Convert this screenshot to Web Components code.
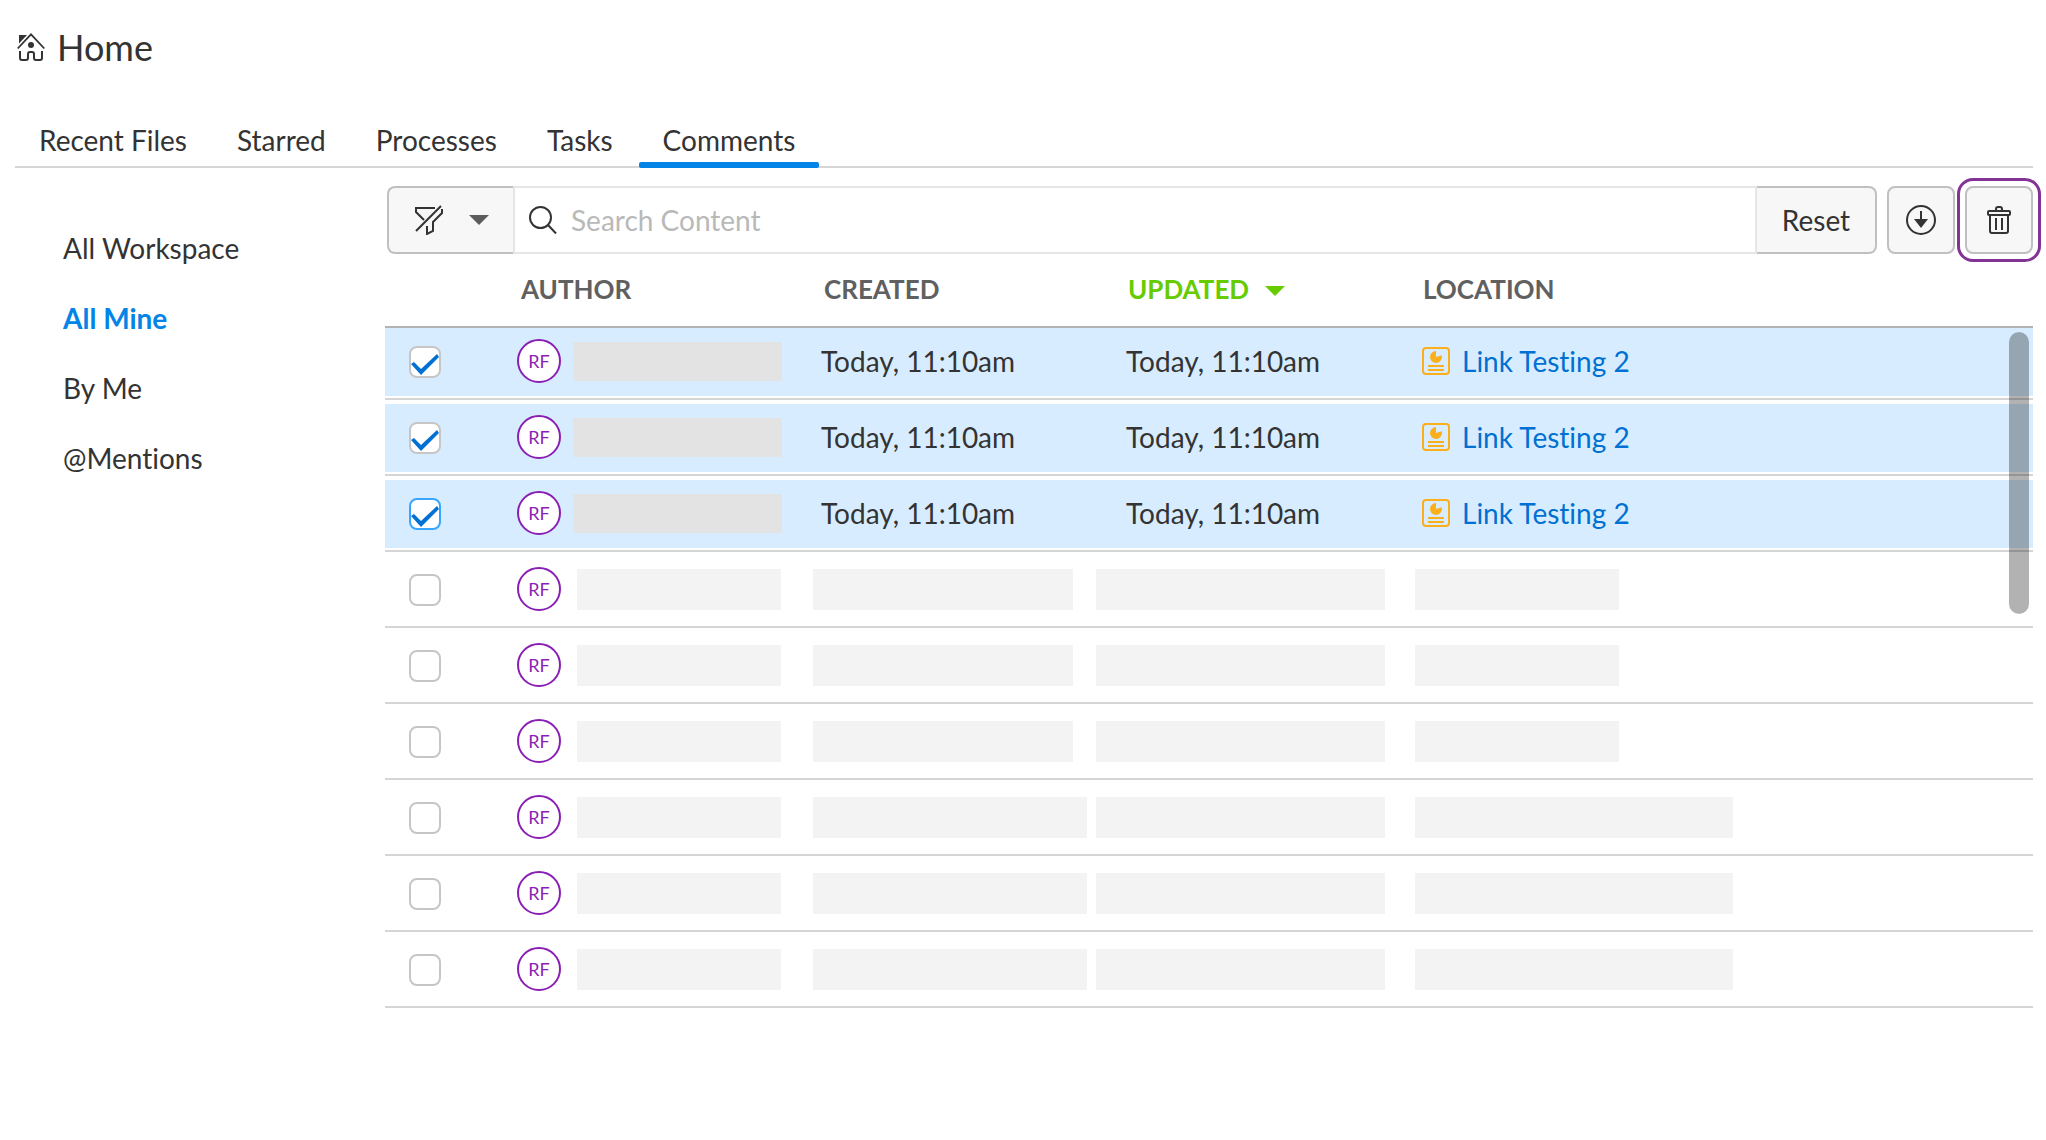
<!DOCTYPE html>
<html lang="en">
<head>
<meta charset="utf-8">
<meta name="viewport" content="width=device-width, initial-scale=1">
<title>Home</title>
<style>
    body {
        margin: 0;
        background: #fff;
        color: #333;
        font-family: Lato, "Liberation Sans", sans-serif;
        font-size: 28px;
        font-variant-ligatures: none;
        line-height: 36px;
    }
</style>
</head>
<body>
<home-page>
    <page-title slot="title">Home</page-title>
    <tab-bar slot="tabs" items="Recent Files,Starred,Processes,Tasks,Comments" active="Comments"></tab-bar>
    <side-nav slot="side" items="All Workspace,All Mine,By Me,@Mentions" active="All Mine"></side-nav>
    <search-toolbar></search-toolbar>
    <comments-table></comments-table>
</home-page>

<script>
// Icon set, each drawn in its own view box
const ICONS = {
    home: [28, 28, `<path d="M0.7 15.5 14 1.4l13.3 14.1" fill="none" stroke="currentColor" stroke-width="1.8"/>
        <path d="M2 2h8L2 10.5z" fill="currentColor"/><circle cx="14" cy="12" r="3" fill="currentColor"/>
        <path d="M3 18v7q0 2 2 2h4q2 0 2-2v-4q0-2 2-2h2q2 0 2 2v4q0 2 2 2h4q2 0 2-2v-7" fill="none" stroke="currentColor" stroke-width="2"/>`],
    filter: [28, 30, `<g fill="none" stroke="currentColor" stroke-width="2">
        <path d="M20 3H1v4l8 8M1 26 26 1M27 4v4l-9 9v9l-6 3v-8"/></g>`],
    search: [28, 28, `<g fill="none" stroke="currentColor" stroke-width="2">
        <circle cx="11.500" cy="11.500" r="10.500"/><path d="M18.500 18.500 27 27.500"/></g>`],
    caret: [20, 10, `<path d="M0 0h20L10 10z" fill="currentColor"/>`],
    download: [30, 30, `<circle cx="15" cy="15" r="14" fill="none" stroke="currentColor" stroke-width="2"/>
        <path d="M15 6v9" stroke="currentColor" stroke-width="2"/><path d="M8 14h14l-7 9z" fill="currentColor"/>`],
    trash: [24, 28, `<g fill="none" stroke="currentColor" stroke-width="2">
        <rect x="1" y="5" width="22" height="4" rx="1"/><path d="M9 5V3q0-2 2-2h2q2 0 2 2v2M3 9v16q0 2 2 2h14q2 0 2-2V9"/>
        <path d="M9 12v12M15 12v12"/></g>`],
    report: [28, 28, `<g fill="none" stroke="currentColor" stroke-width="2">
        <rect x="1" y="1" width="26" height="26" rx="3"/><path d="M6 19h16M6 23h16"/></g>
        <path d="M14 4a6 6 0 1 0 6 6c0-.7-.1-1-.3-1.700L14 10z" fill="currentColor"/>`]
};

class AppIcon extends HTMLElement {
    constructor() {
        super();
        this.attachShadow({ mode: 'open' });
    }

    connectedCallback() {
        const [w, h, body] = ICONS[this.getAttribute('name')];
        this.shadowRoot.innerHTML = `
            <style>
                :host { display: inline-flex; flex: none; }
                svg { display: block; }
            </style>
            <svg width="${w}" height="${h}" viewBox="0 0 ${w} ${h}" aria-hidden="true">${body}</svg>
        `;
    }
}

class HomePage extends HTMLElement {
    constructor() {
        super();
        this.attachShadow({ mode: 'open' });
        this.shadowRoot.innerHTML = `
            <style>
                :host {
                    display: block;
                    padding: 23px 13px 0 15px;
                }
                .columns {
                    display: grid;
                    grid-template-columns: 370px minmax(0, 1fr);
                }
                main { padding-top: 18px; }
            </style>
            <slot name="title"></slot>
            <slot name="tabs"></slot>
            <div class="columns">
                <slot name="side"></slot>
                <main><slot></slot></main>
            </div>
        `;
    }
}

class PageTitle extends HTMLElement {
    constructor() {
        super();
        this.attachShadow({ mode: 'open' });
        this.shadowRoot.innerHTML = `
            <style>
                :host { display: block; }
                h1 {
                    display: flex;
                    align-items: center;
                    gap: 12px;
                    margin: 0;
                    padding-left: 2px;
                    font-size: 36px;
                    font-weight: 400;
                    line-height: 48px;
                }
            </style>
            <h1><app-icon name="home"></app-icon><slot></slot></h1>
        `;
    }
}

class TabBar extends HTMLElement {
    constructor() {
        super();
        this.attachShadow({ mode: 'open' });
    }

    connectedCallback() {
        const active = this.getAttribute('active');
        const tabs = this.getAttribute('items').split(',').map(name =>
            `<button type="button" role="tab" aria-selected="${name === active}">${name}</button>`).join('');
        this.shadowRoot.innerHTML = `
            <style>
                :host {
                    display: block;
                    margin-top: 51px;
                    border-bottom: 2px solid #d6d6d6;
                }
                [role=tablist] { display: flex; gap: 2px; }
                button {
                    position: relative;
                    padding: 0 24px 8px;
                    border: 0;
                    background: none;
                    color: inherit;
                    font: inherit;
                    cursor: pointer;
                }
                /* the marker lies over the bottom rule */
                button[aria-selected=true]::after {
                    content: "";
                    position: absolute;
                    left: 0;
                    right: 0;
                    bottom: -2px;
                    height: 6px;
                    border-radius: 2px;
                    background: #0484e7;
                }
            </style>
            <div role="tablist">${tabs}</div>
        `;
        this.shadowRoot.querySelectorAll('button').forEach(tab => {
            tab.addEventListener('click', () => this.select(tab));
        });
    }

    select(tab) {
        this.shadowRoot.querySelectorAll('button').forEach(other => {
            other.setAttribute('aria-selected', other === tab);
        });
    }
}

class SideNav extends HTMLElement {
    constructor() {
        super();
        this.attachShadow({ mode: 'open' });
    }

    connectedCallback() {
        const active = this.getAttribute('active');
        const links = this.getAttribute('items').split(',').map(name =>
            `<a href="#"${name === active ? ' aria-current="page"' : ''}>${name}</a>`).join('');
        this.shadowRoot.innerHTML = `
            <style>
                :host { display: block; }
                nav {
                    display: flex;
                    flex-direction: column;
                    align-items: flex-start;
                    padding: 45px 0 0 48px;
                }
                a {
                    color: inherit;
                    line-height: 70px;
                    text-decoration: none;
                }
                a[aria-current] {
                    color: #0484e7;
                    font-weight: 700;
                }
            </style>
            <nav>${links}</nav>
        `;
    }
}

class SearchToolbar extends HTMLElement {
    constructor() {
        super();
        this.attachShadow({ mode: 'open' });
        this.shadowRoot.innerHTML = `
            <style>
                :host {
                    display: flex;
                    gap: 10px;
                    height: 68px;
                    margin-left: 2px;
                }
                .group {
                    display: flex;
                    flex: 1;
                    min-width: 0;
                }
                button {
                    display: flex;
                    align-items: center;
                    justify-content: center;
                    box-sizing: border-box;
                    padding: 0;
                    border: 2px solid #c0c0c0;
                    border-radius: 8px;
                    background: #f7f7f7;
                    color: #333;
                    font: inherit;
                    cursor: pointer;
                }
                .filter {
                    gap: 26px;
                    width: 126px;
                    padding-left: 2px;
                    border-right: 0;
                    border-radius: 8px 0 0 8px;
                }
                .filter app-icon:last-child { color: #5c5c5c; }
                .field {
                    display: flex;
                    flex: 1;
                    align-items: center;
                    gap: 14px;
                    min-width: 0;
                    padding-left: 14px;
                    border: 2px solid #e6e6e6;
                }
                input {
                    flex: 1;
                    min-width: 0;
                    padding: 0;
                    border: 0;
                    outline: 0;
                    background: none;
                    color: inherit;
                    font: inherit;
                }
                input::placeholder { color: #b9b9b9; }
                .reset {
                    width: 120px;
                    border-left: 0;
                    border-radius: 0 8px 8px 0;
                }
                .square { width: 68px; }
                .marked {
                    outline: 3px solid #833296;
                    outline-offset: 5px;
                }
            </style>
            <div class="group">
                <button class="filter" type="button" aria-label="Filter">
                    <app-icon name="filter"></app-icon><app-icon name="caret"></app-icon>
                </button>
                <label class="field">
                    <app-icon name="search"></app-icon>
                    <input type="text" placeholder="Search Content" aria-label="Search Content">
                </label>
                <button class="reset" type="button">Reset</button>
            </div>
            <button class="square" type="button" aria-label="Download"><app-icon name="download"></app-icon></button>
            <button class="square marked" type="button" aria-label="Delete"><app-icon name="trash"></app-icon></button>
        `;
        this.input = this.shadowRoot.querySelector('input');
        this.shadowRoot.querySelector('.reset').addEventListener('click', () => {
            this.input.value = '';
        });
    }
}

class UserAvatar extends HTMLElement {
    constructor() {
        super();
        this.attachShadow({ mode: 'open' });
        this.shadowRoot.innerHTML = `
            <style>
                :host {
                    display: flex;
                    flex: none;
                    align-items: center;
                    justify-content: center;
                    box-sizing: border-box;
                    width: 44px;
                    height: 44px;
                    border: 2px solid #8a1fb5;
                    border-radius: 50%;
                    background: #fff;
                    color: #8a1fb5;
                    font-size: 18px;
                    line-height: 24px;
                }
            </style>
            <slot></slot>
        `;
    }
}

// Grey bar that stands in for hidden text
class MaskedText extends HTMLElement {
    constructor() {
        super();
        this.attachShadow({ mode: 'open' });
        this.shadowRoot.innerHTML = `
            <style>
                :host {
                    display: block;
                    width: 204px;
                    height: 41px;
                    background: #f3f3f3;
                }
                :host([size=name]) { width: 209px; height: 39px; background: #e3e3e3; }
                :host([size=date]) { width: 260px; }
                :host([size=date-long]) { width: 274px; }
                :host([size=updated]) { width: 289px; }
                :host([size=place-long]) { width: 318px; }
            </style>
        `;
    }
}

const ROWS = [
    { checked: true, time: 'Today, 11:10am', place: 'Link Testing 2' },
    { checked: true, time: 'Today, 11:10am', place: 'Link Testing 2' },
    { checked: true, focused: true, time: 'Today, 11:10am', place: 'Link Testing 2' },
    {}, {}, {},
    { long: true }, { long: true }, { long: true }
];

class CommentsTable extends HTMLElement {
    constructor() {
        super();
        this.attachShadow({ mode: 'open' });
        this.shadowRoot.innerHTML = `
            <style>
                :host {
                    display: block;
                    position: relative;
                }
                table {
                    width: 100%;
                    border-collapse: separate;
                    border-spacing: 0;
                    table-layout: fixed;
                }
                th.pick { width: 132px; }
                th.author { width: 296px; }
                th.created { width: 283px; }
                th.updated { width: 319px; }
                th {
                    box-sizing: border-box;
                    padding: 17px 0 19px 8px;
                    border-bottom: 2px solid #b3b3b3;
                    color: #606060;
                    font-size: 26px;
                    font-weight: 700;
                    text-align: left;
                }
                th.author { padding-left: 4px; }
                th.created { padding-left: 11px; }
                th.updated { padding-left: 32px; color: #66cc00; }
                th button {
                    display: flex;
                    align-items: center;
                    gap: 16px;
                    padding: 0;
                    border: 0;
                    background: none;
                    color: inherit;
                    font: inherit;
                    cursor: pointer;
                }
                th app-icon { padding-top: 4px; }
                td {
                    box-sizing: border-box;
                    height: 76px;
                    padding: 0 0 4px;
                    border-top: 4px solid transparent;
                    border-bottom: 2px solid #d5d5d5;
                    background-clip: padding-box;
                }
                td:first-child { padding: 0 0 2px 24px; }
                tr:first-child td {
                    height: 72px;
                    border-top: 0;
                }
                tr.selected td {
                    background-color: #d7edff;
                    box-shadow: inset 0 -2px #fff;
                }
                .person {
                    display: flex;
                    align-items: center;
                    gap: 16px;
                }
                .selected .person { gap: 12px; }
                .selected .created { padding-left: 8px; }
                .selected .updated { padding-left: 30px; }
                .selected .place { padding-left: 7px; }
                a {
                    display: flex;
                    align-items: center;
                    gap: 12px;
                    color: #0070d2;
                    text-decoration: none;
                }
                a app-icon { color: #fcae1b; }
                input {
                    appearance: none;
                    display: block;
                    box-sizing: border-box;
                    width: 32px;
                    height: 32px;
                    margin: 0;
                    border: 2px solid #c6c6c6;
                    border-radius: 8px;
                    background: #fff;
                }
                input.focused { border-color: #38a5ff; }
                input:checked::before {
                    content: "";
                    display: block;
                    width: 28px;
                    height: 28px;
                    background: #0070d2;
                    clip-path: polygon(0 16px, 3px 14px, 10px 21px, 26px 6px, 28px 9px, 10px 27px);
                }
                .thumb {
                    position: absolute;
                    top: 78px;
                    right: 4px;
                    width: 20px;
                    height: 282px;
                    border-radius: 10px;
                    background: rgba(0, 0, 0, 0.3);
                }
            </style>
            <table>
                <thead>
                    <tr>
                        <th class="pick"></th>
                        <th class="author">AUTHOR</th>
                        <th class="created">CREATED</th>
                        <th class="updated" aria-sort="descending">
                            <button type="button">UPDATED<app-icon name="caret"></app-icon></button>
                        </th>
                        <th class="place">LOCATION</th>
                    </tr>
                </thead>
                <tbody>${ROWS.map((row, i) => this.renderRow(row, i)).join('')}</tbody>
            </table>
            <div class="thumb"></div>
        `;
    }

    renderRow(row, i) {
        const created = row.time || `<masked-text size="${row.long ? 'date-long' : 'date'}"></masked-text>`;
        const updated = row.time || '<masked-text size="updated"></masked-text>';
        const place = row.place
            ? `<a href="#"><app-icon name="report"></app-icon>${row.place}</a>`
            : `<masked-text${row.long ? ' size="place-long"' : ''}></masked-text>`;
        return `
            <tr class="${row.checked ? 'selected' : ''}">
                <td><input type="checkbox" aria-label="Select comment ${i + 1}"
                    class="${row.focused ? 'focused' : ''}" ${row.checked ? 'checked' : ''}></td>
                <td><div class="person"><user-avatar>RF</user-avatar><masked-text${row.checked ? ' size="name"' : ''}></masked-text></div></td>
                <td class="created">${created}</td>
                <td class="updated">${updated}</td>
                <td class="place">${place}</td>
            </tr>
        `;
    }
}

customElements.define('app-icon', AppIcon);
customElements.define('home-page', HomePage);
customElements.define('page-title', PageTitle);
customElements.define('tab-bar', TabBar);
customElements.define('side-nav', SideNav);
customElements.define('search-toolbar', SearchToolbar);
customElements.define('user-avatar', UserAvatar);
customElements.define('masked-text', MaskedText);
customElements.define('comments-table', CommentsTable);
</script>
</body>
</html>
